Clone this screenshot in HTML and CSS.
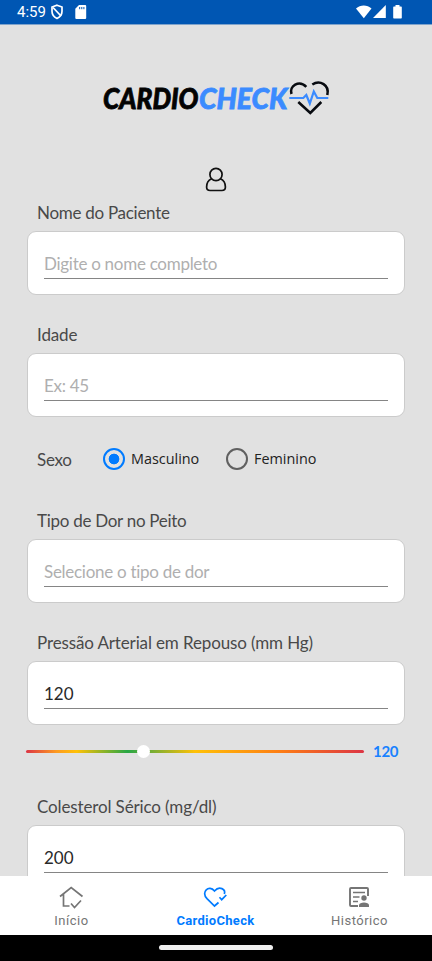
FILE: index.html
```html
<!DOCTYPE html>
<html lang="pt-BR">
<head>
<meta charset="utf-8">
<title>CardioCheck</title>
<link rel="stylesheet" href="styles.css">
</head>
<body>
<header class="status">
  <span class="clock">4:59</span>
  <svg class="shield" width="14" height="16" viewBox="0 0 14 16"><path d="M7 1.200 12 3v4.200c0 3.300-2 5.800-5 7.200C4 13 2 10.500 2 7.200V3z" fill="none" stroke="#fff" stroke-width="1.700"/><path d="M3 3.500 11 12" stroke="#fff" stroke-width="1.800"/></svg>
  <svg class="sd" width="12" height="14" viewBox="0 0 12 14"><path d="M4 0h6.200a1 1 0 0 1 1 1v12a1 1 0 0 1-1 1H1.300a1 1 0 0 1-1-1V3.700z" fill="#fff"/><path d="M4.700 2v2.200M6.800 2v2.200M8.900 2v2.200" stroke="#0056b3" stroke-width="1"/></svg>
  <svg class="signals" width="48" height="16" viewBox="0 0 48 16"><path d="M0 4.600C4.300.4 11.200.4 15.500 4.600L7.800 14.200z" fill="#fff"/><path d="M17 14 29.800 1v13z" fill="#fff"/><path d="M39.500 1h4v1.500h1.600q.7 0 .7.700v10.600q0 .7-.7.700h-7.200q-.7 0-.7-.7V3.200q0-.7.700-.7h1.600z" fill="#fff"/></svg>
</header>
<main class="content">
  <svg class="logo" width="230" height="40" viewBox="0 0 230 40">
    <text class="brand" x="1" y="32" textLength="95.500" lengthAdjust="spacingAndGlyphs">CARDIO</text>
    <text class="brand blue" x="97" y="32" textLength="88.500" lengthAdjust="spacingAndGlyphs">CHECK</text>
    <g fill="none" stroke-width="2.600" transform="translate(-.7 0)">
      <path d="M190.200 17c-2.600-8 7.500-14.500 14.800-7.200M211 7.500c7.500-5 17.500.5 15 10.500M197 25l12 11 11-11" stroke="#080b10"/>
      <path d="M188 21h14l3-3 3.500 8.500 4-12 3.500 6.500h11" stroke="#3b8bff" stroke-width="2.200"/>
    </g>
  </svg>
  <svg class="person" width="24" height="26" viewBox="0 0 24 26"><g fill="none" stroke="#111" stroke-width="1.700"><circle cx="12" cy="7.500" r="6.100"/><path d="M7.500 11.700C4.500 13 2.600 16 2.600 20c0 2.600 1.300 3.500 3.500 3.500h11.800c2.200 0 3.500-.9 3.500-3.500 0-4-1.900-7-4.900-8.300"/></g></svg>
  <section class="field"><label class="tight">Nome do Paciente</label><div class="box"><div class="input hint">Digite o nome completo</div></div></section>
  <section class="field"><label>Idade</label><div class="box"><div class="input hint">Ex: 45</div></div></section>
  <section class="sex">
    <span class="sex-label tight">Sexo</span>
    <span class="radio on"></span><span class="option first">Masculino</span>
    <span class="radio"></span><span class="option">Feminino</span>
  </section>
  <section class="field"><label class="tight">Tipo de Dor no Peito</label><div class="box"><div class="input hint">Selecione o tipo de dor</div></div></section>
  <section class="field pressure"><label>Pressão Arterial em Repouso (mm Hg)</label><div class="box"><div class="input">120</div></div></section>
  <div class="slider"><div class="track"><span class="thumb"></span></div><span class="value">120</span></div>
  <section class="field"><label>Colesterol Sérico (mg/dl)</label><div class="box"><div class="input">200</div></div></section>
</main>
<nav class="tabs">
  <div class="tab"><svg width="26" height="24" viewBox="0 0 26 24"><path d="M2 11.500 13.200 2.500 24.500 11.500M5.500 9v12H11.500M13 18.500l3.500 4 6.500-7" fill="none" stroke="#757575" stroke-width="1.700"/></svg><span>Início</span></div>
  <div class="tab active"><svg width="26" height="24" viewBox="0 0 26 24"><path d="M16.500 17.500 12.500 21 5 13.700C-1.500 7 7-.8 12.500 6 17.500.2 24 4.500 22.300 9M17.500 12.300l2.200 2.400 4.600-4.700" fill="none" stroke="#007bff" stroke-width="1.700"/></svg><span>CardioCheck</span></div>
  <div class="tab"><svg width="26" height="24" viewBox="0 0 26 24"><path d="M12 21H5Q4 21 4 20V4Q4 3 5 3H21Q22 3 22 4V11" fill="none" stroke="#757575" stroke-width="1.900"/><path d="M7 7.500H19M7 12H13.500M7 16.500H12" stroke="#757575" stroke-width="1.700"/><circle cx="18" cy="13" r="2.700" fill="#757575"/><path d="M13 22v-1.700c0-3.700 10-3.700 10 0V22z" fill="#757575"/></svg><span>Histórico</span></div>
</nav>
<footer class="gesture"><span class="pill"></span></footer>
</body>
</html>
```
FILE: styles.css
```css
* { box-sizing: border-box; }
body { margin: 0; height: 961px; display: flex; flex-direction: column; overflow: hidden; background: #000; font-family: Lato, sans-serif; }
svg { display: block; flex: none; }
.status { flex: none; height: 24px; background: #0056b3; display: flex; align-items: center; padding: 0 28px 0 17px; color: #fff; }
.clock { font: 400 15px/24px Roboto, sans-serif; width: 32px; white-space: nowrap; }
.shield { margin-left: 1px; }
.sd { margin-left: 11px; }
.signals { margin-left: auto; }
.content { flex: none; height: 852px; overflow: hidden; background: #e1e1e1; padding: 0 27px; border-top: 1px solid #7fa3cb; }
.logo { margin: 52px 0 0 75px; }
.brand { font: italic 900 29px Lato, sans-serif; fill: #030303; stroke: #030303; stroke-width: .8px; }
.blue { fill: #3b8bff; stroke: #3b8bff; }
.person { margin: 50px 0 0 177px; }
.field { margin-bottom: 29px; }
.field label { display: block; height: 22px; margin: 0 0 7px 10px; font-size: 17px; line-height: 22px; letter-spacing: -.13px; color: #494949; white-space: nowrap; }
.field label.tight, .tight { letter-spacing: -.28px; }
.person + .field { margin-top: 9px; }
.box { height: 64px; background: #fff; border: 1px solid #cbcbcb; border-radius: 9px; padding: 18px 16px 0; }
.input { height: 29px; line-height: 27px; font-size: 17px; color: #292929; border-bottom: 1px solid #858585; }
.hint { color: #afafaf; letter-spacing: -.28px; }
.sex { display: flex; align-items: center; height: 24px; margin: 30px 0 39px; padding-left: 10px; }
.sex-label { width: 66px; font-size: 17px; color: #494949; }
.radio { width: 22px; height: 22px; border: 2px solid #606060; border-radius: 50%; }
.on { border-color: #007bff; background: radial-gradient(circle, #007bff 5px, transparent 5.7px); }
.option { margin: -1px 0 0 6px; font: 14.4px/22px "Open Sans", sans-serif; color: #222; }
.first { width: 95px; }
.pressure { margin-bottom: 0; }
.slider { display: flex; align-items: center; height: 22px; margin: 15px 0 34px -1px; }
.track { position: relative; width: 338px; height: 3px; border-radius: 2px; background: linear-gradient(90deg, #dc3545, #fd9b22 9%, #ffc107 15%, #28a745 30%, #7fae32 38%, #ffc107 50%, #fd7e14 75%, #dc3545); }
.thumb { position: absolute; left: 111px; top: -5px; width: 13px; height: 13px; border-radius: 50%; background: #fff; }
.value { margin-left: 9px; font-size: 15px; font-weight: 700; letter-spacing: -.3px; color: #1982ff; }
.tabs { flex: none; height: 59px; background: #fff; display: grid; grid-template-columns: repeat(3, 1fr); }
.tab { display: flex; flex-direction: column; align-items: center; padding: 9px 2px 0 0; color: #757575; font: 400 13px/16px Roboto, sans-serif; letter-spacing: .5px; }
.tab span { margin: 4px -1px 0 0; }
.active { color: #007bff; font-weight: 700; letter-spacing: .3px; }
.gesture { height: 26px; display: flex; justify-content: center; padding: 10px 1px 0 0; background: #000; }
.pill { width: 114px; height: 5px; border-radius: 3px; background: #eee; }
```
